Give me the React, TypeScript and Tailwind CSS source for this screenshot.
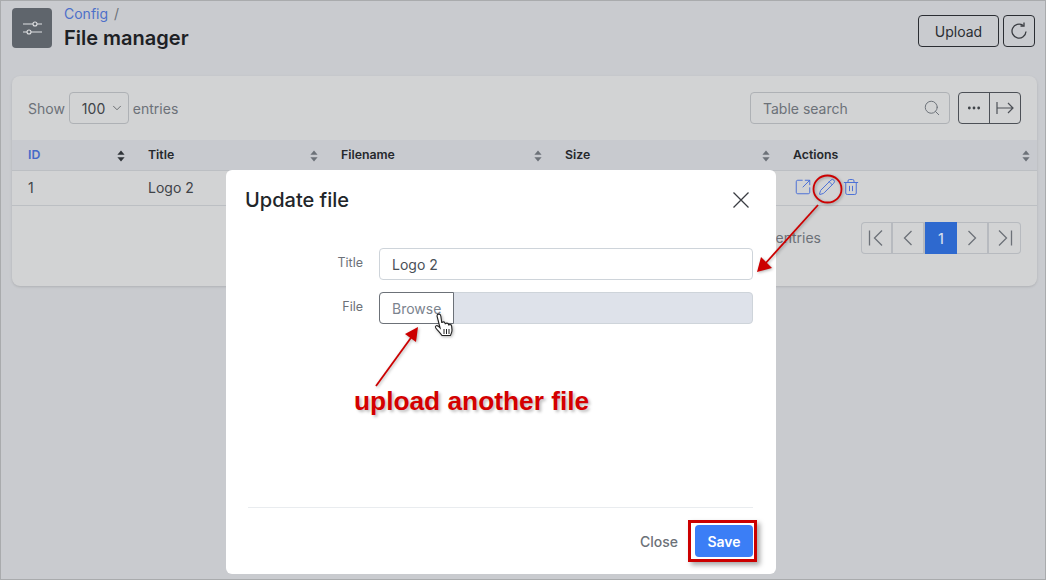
import React from "react";
import { ChevronDown, Search, Ellipsis, SquareArrowOutUpRight, Pencil, Trash2 } from "lucide-react";

function Sort({ dark }: { dark?: boolean }) {
  return (
    <svg width="8" height="12" viewBox="0 0 8 12" fill={dark ? "#2f3338" : "#6c7178"}>
      <path d="M4 .5 7.6 4.8H.4z" />
      <path d="M4 11.500 .4 7.200h7.200z" />
    </svg>
  );
}

function Th({ label, blue, dark }: { label: string; blue?: boolean; dark?: boolean }) {
  return (
    <div className="flex items-center justify-between pl-4 pr-[7px] pt-[1px]">
      <span className={`text-[12.3px] font-semibold ${blue ? "text-[#4569c8]" : "text-[#25282c]"}`}>{label}</span>
      <Sort dark={dark} />
    </div>
  );
}

function PageIcon({ d }: { d: string }) {
  return (
    <svg width="20" height="20" viewBox="0 0 20 20" fill="none" stroke="#6c7178" strokeWidth="1.3">
      <path d={d} />
    </svg>
  );
}

function PageBtn({ d, active, label }: { d?: string; active?: boolean; label?: string }) {
  return (
    <div
      className={`w-8 h-8 flex items-center justify-center text-[14px] font-medium ${
        active ? "bg-[#2e69cf] text-[#d4dcec]" : "border-r-2 last:border-r-0 border-[#b7babf]"
      }`}
    >
      {d ? <PageIcon d={d} /> : label}
    </div>
  );
}

export default function App() {
  return (
    <div
      className="relative w-[1046px] h-[580px] overflow-hidden bg-[#c9cbcf] border border-[#a9abad] text-[#6c7178]"
      style={{ fontFamily: "Inter, 'Liberation Sans', sans-serif" }}
    >
      <div className="w-[1044px] pl-[11px] pt-[7px] flex flex-col">
        <header className="flex justify-between h-10">
          <div className="flex gap-3">
            <div className="w-10 h-10 rounded bg-[#5f656c] flex items-center justify-center">
              <svg width="20" height="20" viewBox="0 0 20 20" fill="none" stroke="#e0e1e3" strokeWidth="1.1">
                <path d="M1 6h10M15 6h5M1 14h4M9 14h11" />
                <circle cx="13" cy="6" r="2" />
                <circle cx="7" cy="14" r="2" />
              </svg>
            </div>
            <div className="flex flex-col -mt-[2px]">
              <div className="text-[14px] leading-[16px] h-[16px]">
                <span className="text-[#4d70c9]">Config</span>
                <span className="ml-[6px]">/</span>
              </div>
              <h1 className="text-[20px] leading-[28px] mt-[2px] font-semibold text-[#1d2125]">File manager</h1>
            </div>
          </div>
          <div className="flex gap-1 mt-[7px] pr-[10px]">
            <div className="w-[81px] h-8 rounded border border-[#2b2e33] flex items-center justify-center text-[14px] text-[#2b2e33]">
              Upload
            </div>
            <div className="w-8 h-8 rounded border border-[#2b2e33] flex items-center justify-center">
              <svg width="20" height="20" viewBox="0 0 20 20" fill="none" stroke="#3a3d42" strokeWidth="1.3">
                <path d="M17 10.500A7 7 0 1 1 14 4.300" />
                <path d="M15 1.500v3.500h-3.500" />
              </svg>
            </div>
          </div>
        </header>

        <section className="mt-[28px] h-[210px] w-[1025px] rounded-lg bg-[#d2d3d4] flex flex-col shadow-sm">
          <div className="h-[64px] flex items-center justify-between pl-4 pr-4">
            <div className="flex items-center gap-1 text-[14px]">
              <span className="pt-px">Show</span>
              <div className="w-[60px] h-8 rounded border border-[#aeb1b5] flex items-center pl-3 gap-[5px] text-[#3f4348]">
                100 <ChevronDown size={14} strokeWidth={1.2} />
              </div>
              <span className="pt-px">entries</span>
            </div>
            <div className="flex items-center gap-2">
              <div className="w-[200px] h-8 rounded border border-[#aeb1b5] flex items-center justify-between pl-3 pr-[8px] text-[14px]">
                <span className="pt-px">Table search</span>
                <Search size={18} strokeWidth={1.3} />
              </div>
              <div className="w-[63px] h-8 rounded border border-[#4c5056] flex text-[#3f4348]">
                <div className="w-[31px] flex items-center justify-center border-r border-[#4c5056]">
                  <Ellipsis size={16} strokeWidth={2.2} />
                </div>
                <div className="flex-1 flex items-center justify-center">
                  <svg width="20" height="20" viewBox="0 0 20 20" fill="none" stroke="#4c5056" strokeWidth="1.2">
                    <path d="M2 4v12M2 10h16M13 5l5 5-5 5" />
                  </svg>
                </div>
              </div>
            </div>
          </div>

          <div className="grid grid-cols-[120px_193px_224px_228px_1fr] h-[31px] bg-[#c8cacf] border-b border-[#bcbfc3]">
            <Th label="ID" blue dark />
            <Th label="Title" />
            <Th label="Filename" />
            <Th label="Size" />
            <Th label="Actions" />
          </div>
          <div className="grid grid-cols-[120px_193px_224px_228px_1fr] h-[35px] items-center border-b border-[#bcbfc3] text-[14px] text-[#3f4348] pb-[2px]">
            <div className="pl-4">1</div>
            <div className="pl-4">Logo 2</div>
            <div />
            <div />
            <div className="pl-[17px] flex items-center text-[#4a6fd6]">
              <SquareArrowOutUpRight size={18} strokeWidth={1.3} />
              <Pencil size={18} strokeWidth={1.3} className="ml-[6px]" />
              <Trash2 size={18} strokeWidth={1.3} className="ml-[6px]" />
            </div>
          </div>
          <div className="flex items-center justify-end pr-4 pt-4 gap-10 text-[14px]">
            <span className="-mt-[1px]">Showing 1 to 1 of 1 entries</span>
            <div className="flex h-8 w-[160px] rounded ring-1 ring-inset ring-[#b7babf] overflow-hidden">
              <PageBtn d="M3.500 2.500v15M16 2.500l-7.500 7.500 7.500 7.500" />
              <PageBtn d="M13.500 3l-7 7 7 7" />
              <PageBtn active label="1" />
              <PageBtn d="M6.500 3l7 7-7 7" />
              <PageBtn d="M16.500 2.500v15M4 2.500l7.500 7.500-7.500 7.500" />
            </div>
          </div>
        </section>
      </div>

      {/* Modal */}
      <div className="absolute left-[225px] top-[169px] w-[550px] h-[404px] bg-white rounded-md flex flex-col text-[#3f4348]">
        <div className="h-[60px] flex items-center justify-between pl-[19px] pr-[26px]">
          <h2 className="text-[20px] font-medium text-[#212529]">Update file</h2>
          <svg width="18" height="18" viewBox="0 0 18 18" fill="none" stroke="#3a3d42" strokeWidth="1.3">
            <path d="M1.500 1.500l15 15M16.500 1.500l-15 15" />
          </svg>
        </div>
        <div className="flex-1 pt-[18px] pl-[22px] pr-[23px] flex flex-col gap-3">
          <div className="flex">
            <label className="w-[115px] text-right text-[12.5px] text-[#6c7178] mt-[6px]">Title</label>
            <div className="ml-[16px] flex-1 h-8 rounded border border-[#ced4da] flex items-center pl-3 text-[14px] text-[#495057]">
              Logo 2
            </div>
          </div>
          <div className="flex">
            <label className="w-[115px] text-right text-[12.5px] text-[#6c7178] mt-[6px]">File</label>
            <div className="ml-[16px] flex-1 h-8 rounded border border-[#ced4da] bg-[#dee2ea] flex">
              <div className="w-[75px] -m-px h-8 rounded-l border border-[#6c7178] bg-white flex items-center pl-3 text-[14px] text-[#7b838e]">
                Browse
              </div>
            </div>
          </div>
        </div>
        <div className="ml-[22px] mr-[23px] h-[67px] border-t border-[#e9ecef] flex items-center justify-end gap-[17px]">
          <span className="text-[14px] text-[#6c7178] font-medium">Close</span>
          <div className="w-[58px] h-8 rounded bg-[#3b7ef6] text-white text-[14px] font-semibold flex items-center justify-center">
            Save
          </div>
        </div>
      </div>

      {/* Annotations */}
      <div className="absolute left-[687px] top-[519px] w-[69px] h-[42px] border-[3px] border-[#cc0000] shadow-[3px_3px_5px_rgba(0,0,0,0.35)]" />
      <div
        className="absolute left-[353px] top-[383px] text-[26.3px] leading-[34px] font-bold text-[#d40000] whitespace-nowrap [text-shadow:2px_2px_3px_rgba(0,0,0,0.25)]"
        style={{ fontFamily: "'Liberation Sans', sans-serif" }}
      >
        upload another file
      </div>
      <svg
        className="absolute left-[-1px] top-[-1px] pointer-events-none [filter:drop-shadow(1.5px_1.5px_1.5px_rgba(0,0,0,0.3))]"
        width="1046"
        height="580"
        viewBox="0 0 1046 580"
        fill="none"
      >
        <ellipse cx="827.5" cy="189" rx="14" ry="13.5" stroke="#cc0000" strokeWidth="1.8" />
        <path d="M818 205 764 265" stroke="#cc0000" strokeWidth="1.8" />
        <path d="M757 272 761 257 772 268z" fill="#cc0000" />
        <path d="M376 386 413 335" stroke="#cc0000" strokeWidth="1.8" />
        <path d="M418 327 416 342 405 334z" fill="#cc0000" />
        <g transform="translate(0 -1)">
          <path
            d="M437 317c0-2.500 3.500-2.500 3.800 0l1 7c.3-1.500 3-1.500 3.200.2l.3 1c.3-1.500 3-1.500 3.200.2l.2 1c.4-1.300 2.800-1 2.900.5l.4 4c0 2.500-.8 3.500-1.600 5.600h-8.400c-1.500-2.200-5-5.800-6.200-7.500-1.200-2 .8-3 2.500-1.800l1.800 1.800z"
            fill="#fff"
            stroke="#222"
            strokeWidth="1.1"
          />
          <path d="M444 330v5M446.500 330v5M449 330v5" stroke="#222" strokeWidth="1" />
        </g>
      </svg>
    </div>
  );
}
